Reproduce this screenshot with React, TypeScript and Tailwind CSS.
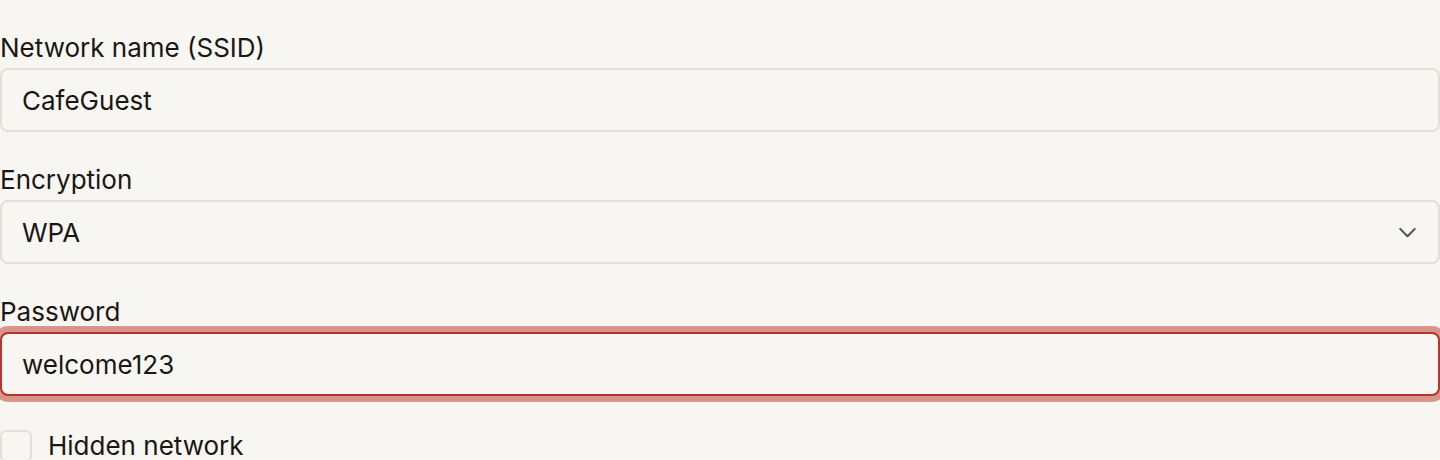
import { useState } from "react";

const fieldBox =
  "h-16 w-full rounded-lg border-2 border-[#e3ded7] bg-[#f8f6f2] px-5 text-[26px] text-[#1a1613] outline-none";

const App = () => {
  const [ssid, setSsid] = useState("CafeGuest");
  const [enc, setEnc] = useState("WPA");
  const [password, setPassword] = useState("welcome123");
  const [hidden, setHidden] = useState(false);

  return (
    <div
      className="min-h-[460px] bg-[#f8f6f2] pt-7 text-[#1a1613]"
      style={{ fontFamily: "Inter, 'Noto Sans', sans-serif" }}
    >
      <div className="flex flex-col gap-7">
        <div className="flex flex-col gap-0.5">
          <label className="pt-0.5 text-[26px] leading-9">Network name (SSID)</label>
          <input
            className={fieldBox}
            value={ssid}
            onChange={(e) => setSsid(e.target.value)}
          />
        </div>

        <div className="flex flex-col gap-0.5">
          <label className="pt-0.5 text-[26px] leading-9">Encryption</label>
          <div className="relative">
            <select
              className={fieldBox + " appearance-none"}
              value={enc}
              onChange={(e) => setEnc(e.target.value)}
            >
              <option>WPA</option>
              <option>WEP</option>
              <option>None</option>
            </select>
            <svg
              className="pointer-events-none absolute right-[20px] top-1/2 -translate-y-1/2"
              width="25"
              height="25"
              viewBox="0 0 24 24"
              fill="none"
              stroke="#57524d"
              strokeWidth="2"
              strokeLinecap="round"
              strokeLinejoin="round"
            >
              <path d="M5 9l7 7 7-7" />
            </svg>
          </div>
        </div>

        <div className="flex flex-col gap-0.5">
          <label className="pt-0.5 text-[26px] leading-9">Password</label>
          <input
            className="h-16 w-full rounded-lg border-2 border-[#b5372b] bg-[#f8f6f2] px-5 text-[26px] text-[#1a1613] outline-none ring-[6px] ring-[#d9948b]"
            value={password}
            onChange={(e) => setPassword(e.target.value)}
          />
        </div>

        <label className="mt-1 flex items-center gap-4">
          <input
            type="checkbox"
            checked={hidden}
            onChange={(e) => setHidden(e.target.checked)}
            className="h-8 w-8 appearance-none rounded-md border-2 border-[#e3ded7] bg-[#f8f6f2]"
          />
          <span className="text-[26px] leading-9">Hidden network</span>
        </label>
      </div>
    </div>
  );
};

export default App;
